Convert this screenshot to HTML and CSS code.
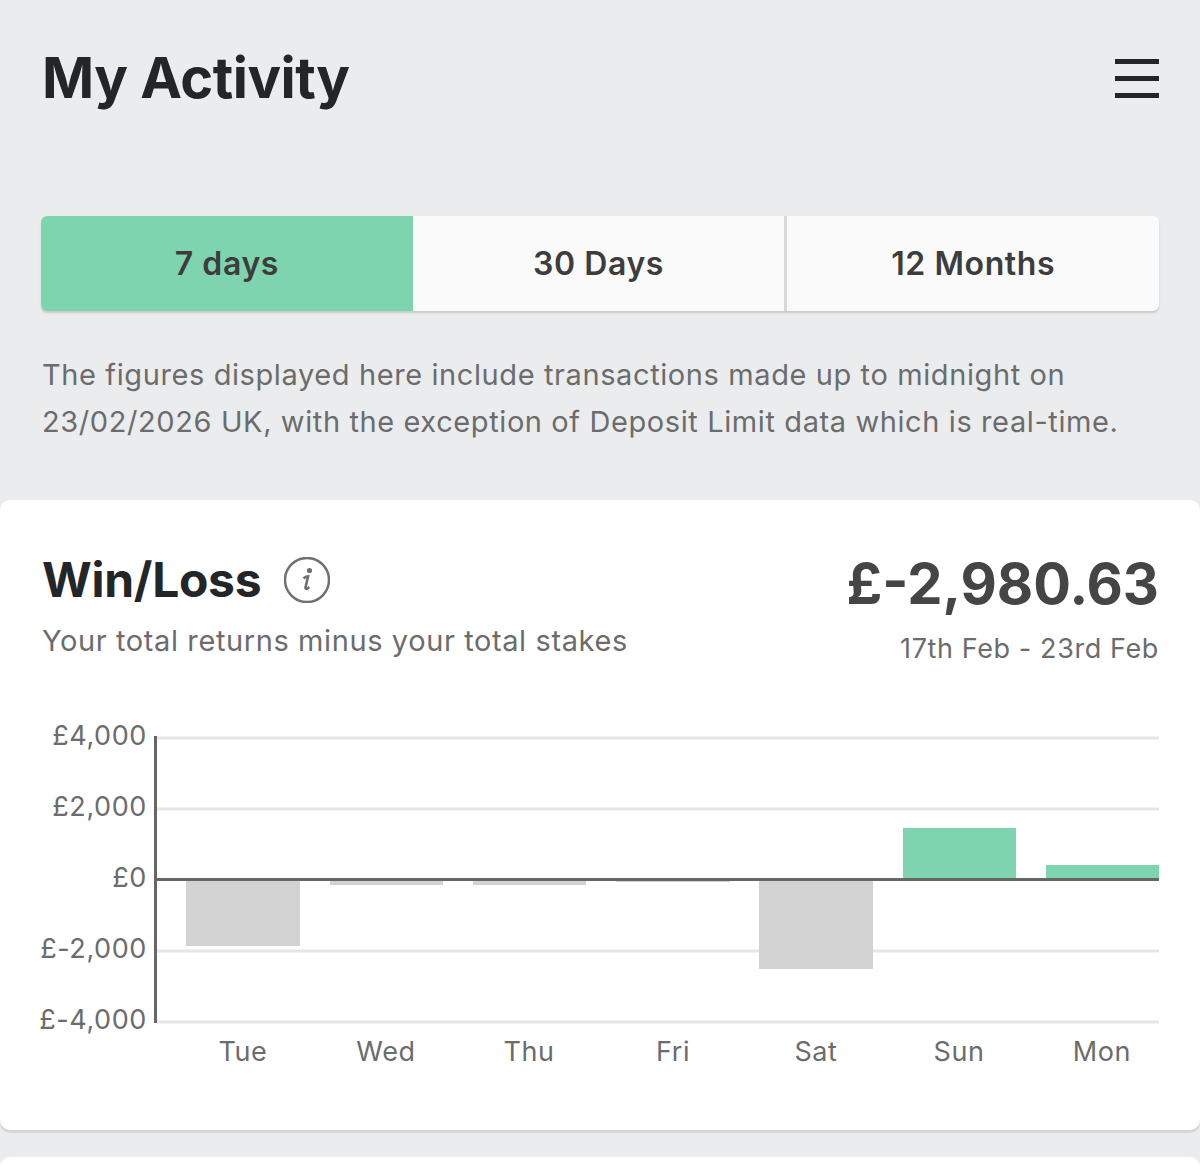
FILE: index.html
```html
<!DOCTYPE html>
<html lang="en">
<head>
  <meta charset="UTF-8">
  <title>My Activity</title>
  <link rel="stylesheet" href="styles.css">
</head>
<body>

  <header class="page-header">
    <h1>My Activity</h1>
    <div class="menu-icon">
      <span></span>
      <span></span>
      <span></span>
    </div>
  </header>

  <div class="tabs">
    <div class="tab active">7 days</div>
    <div class="tab">30 Days</div>
    <div class="tab">12 Months</div>
  </div>

  <p class="note">The figures displayed here include transactions made up to midnight on 23/02/2026 UK, with the exception of Deposit Limit data which is real-time.</p>

  <section class="card">
    <div class="card-head">
      <div>
        <div class="card-title">
          <h2>Win/Loss</h2>
          <svg class="info-icon" viewBox="0 0 46 46" width="46" height="46">
            <circle cx="23" cy="23" r="22" fill="none" stroke="#707070" stroke-width="2.5"/>
            <circle cx="25.5" cy="13.5" r="2.6" fill="#707070"/>
            <path d="M19.5 21.5c1.5-1.6 3-2.3 4.6-2.2l-2.6 11.2c-.3 1.6 1 2.2 3.8-.5" fill="none" stroke="#707070" stroke-width="2.6"/>
          </svg>
        </div>
        <p class="card-sub">Your total returns minus your total stakes</p>
      </div>
      <div class="card-total">
        <div class="amount">£-2,980.63</div>
        <p class="range">17th Feb - 23rd Feb</p>
      </div>
    </div>

    <svg class="chart" viewBox="0 0 1200 380" width="1200" height="380">
      <!-- grid -->
      <g class="grid">
        <line x1="157" x2="1159" y1="38" y2="38"/>
        <line x1="157" x2="1159" y1="109" y2="109"/>
        <line x1="157" x2="1159" y1="251" y2="251"/>
        <line x1="157" x2="1159" y1="322" y2="322"/>
      </g>

      <!-- bars -->
      <g class="bar-loss">
        <rect x="186" y="180" width="114" height="66"/>
        <rect x="330" y="180" width="113" height="5"/>
        <rect x="473" y="180" width="113" height="5"/>
        <rect x="616" y="180" width="114" height="2"/>
        <rect x="759" y="180" width="114" height="89"/>
      </g>
      <g class="bar-win">
        <rect x="903" y="128" width="113" height="51"/>
        <rect x="1046" y="165" width="113" height="14"/>
      </g>

      <!-- axes -->
      <g class="axis">
        <line x1="155.5" x2="155.5" y1="36" y2="323"/>
        <line x1="155" x2="1159" y1="179.5" y2="179.5"/>
      </g>

      <g class="y-labels">
        <text x="147" y="45">£4,000</text>
        <text x="147" y="116">£2,000</text>
        <text x="147" y="187">£0</text>
        <text x="147" y="258">£-2,000</text>
        <text x="147" y="329">£-4,000</text>
      </g>
      <g class="x-labels">
        <text x="243" y="361">Tue</text>
        <text x="386" y="361">Wed</text>
        <text x="529" y="361">Thu</text>
        <text x="673" y="361">Fri</text>
        <text x="816" y="361">Sat</text>
        <text x="959" y="361">Sun</text>
        <text x="1102" y="361">Mon</text>
      </g>
    </svg>
  </section>

  <section class="card-next"></section>

</body>
</html>
```

FILE: styles.css
```css
html, body {
  height: 1166px;
  overflow: hidden;
}
body {
  margin: 0;
  background-color: #ebecee;
  font-family: Inter, "Liberation Sans", sans-serif;
  color: #242526;
}
.page-header {
  display: flex;
  justify-content: space-between;
  align-items: center;
  height: 156px;
  padding: 0 41px 0 42px;
}
h1 {
  margin: 0;
  font-size: 56px;
  font-weight: 700;
  letter-spacing: -0.5px;
}
.menu-icon {
  display: flex;
  flex-direction: column;
  gap: 12px;
  width: 44px;
}
.menu-icon span {
  height: 5px;
  background: #242526;
}
.tabs {
  display: flex;
  height: 95px;
  margin: 60px 41px 0;
  background: #fafafa;
  border-radius: 6px;
  box-shadow: 0 2px 2px rgba(0, 0, 0, 0.15);
  overflow: hidden;
}
.tab {
  flex: 1;
  display: flex;
  align-items: center;
  justify-content: center;
  font-size: 32px;
  font-weight: 600;
  letter-spacing: 0.6px;
  color: #3d3d3d;
}
.tab.active {
  background: #7fd4b0;
}
.tab:last-child {
  border-left: 3px solid #d8d8d8;
}
.note {
  margin: 40px 41px 0 42px;
  font-size: 29px;
  line-height: 47px;
  letter-spacing: 0.6px;
  color: #6c6c6c;
}
.card {
  height: 630px;
  margin-top: 55px;
  background: #fff;
  border-radius: 10px;
  box-shadow: 0 3px 1px #d6d6d6;
  box-sizing: border-box;
  padding-top: 50px;
}
.card-head {
  display: flex;
  justify-content: space-between;
  height: 150px;
  padding: 0 41px 0 42px;
}
.card-title {
  display: flex;
  align-items: center;
  gap: 23px;
}
h2 {
  margin: 0;
  font-size: 48px;
  font-weight: 700;
  letter-spacing: -0.3px;
}
.card-sub, .range {
  margin: 14px 0 0;
  font-size: 29px;
  letter-spacing: 0.6px;
  color: #6c6c6c;
}
.card-total {
  text-align: right;
}
.amount {
  font-size: 56px;
  font-weight: 700;
  color: #454545;
}
.range {
  font-size: 27px;
}
.chart {
  display: block;
}
.grid line {
  stroke: #e6e6e6;
  stroke-width: 3;
}
.axis line {
  stroke: #666;
  stroke-width: 3;
}
.bar-loss rect {
  fill: #d2d2d2;
}
.bar-win rect {
  fill: #7fd4b0;
}
.chart text {
  font-size: 27px;
  letter-spacing: 0.6px;
  fill: #6c6c6c;
}
.y-labels text {
  text-anchor: end;
}
.x-labels text {
  text-anchor: middle;
}
.card-next {
  height: 60px;
  margin-top: 27px;
  background: #fff;
  border-radius: 10px;
}
```
